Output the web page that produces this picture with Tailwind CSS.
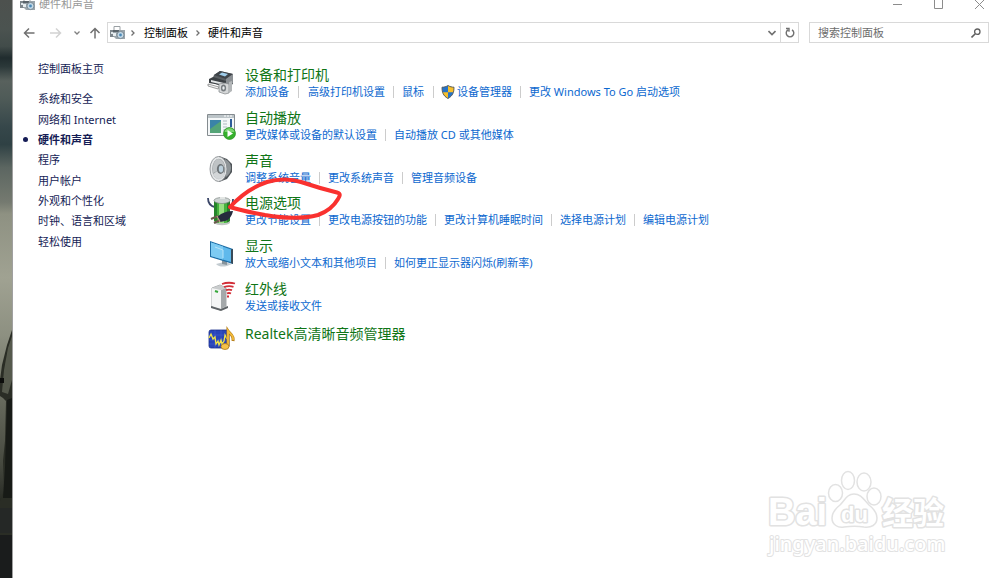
<!DOCTYPE html>
<html lang="zh-CN">
<head>
  <meta charset="UTF-8">
  <meta name="viewport" content="width=device-width, initial-scale=1.0">
  <title>硬件和声音</title>
  <script src="https://cdn.jsdelivr.net/npm/@tailwindcss/browser@4"></script>
</head>
<body class="flex min-h-screen bg-white font-['Noto_Sans','Noto_Sans_CJK_SC',sans-serif] text-[11px] leading-4 text-black overflow-x-hidden">

  <!-- Shared icon: printer and speaker -->
  <svg class="hidden">
    <symbol id="hardware" viewBox="0 0 15 14">
      <path d="M4 5V.5h6V5" fill="#fff" stroke="#9aa0a4"/>
      <path d="M0 4h4v7H0z" fill="#7d868c"/>
      <path d="M1 6h2v2H1z" fill="#dfe6ea"/>
      <path d="M3 4h12v9H6l-3-3z" fill="#9ba5ab"/>
      <path d="M3 4h6v2H3z" fill="#59636a"/>
      <path d="M3 7h3v3H3z" fill="#e8eef1"/>
      <circle cx="10.5" cy="9" r="3.6" fill="#c3d8e6" stroke="#7c8a94"/>
      <circle cx="10.5" cy="9" r="1.4" fill="#4b8ab8"/>
    </symbol>
  </svg>

  <!-- Desktop behind the window -->
  <div class="relative w-3 shrink-0">
    <svg class="absolute inset-0 w-full h-full" viewBox="0 0 12 578" preserveAspectRatio="none">
      <defs>
        <linearGradient id="sky" x1="0" y1="0" x2="0" y2="1">
          <stop offset="0" stop-color="#4d514e"/>
          <stop offset=".05" stop-color="#4b5350"/>
          <stop offset=".08" stop-color="#424c4a"/>
          <stop offset=".1" stop-color="#202c2e"/>
          <stop offset=".115" stop-color="#2b3839"/>
          <stop offset=".14" stop-color="#58615d"/>
          <stop offset=".17" stop-color="#4f5b58"/>
          <stop offset=".22" stop-color="#36474a"/>
          <stop offset=".25" stop-color="#2f4144"/>
          <stop offset=".29" stop-color="#5c6661"/>
          <stop offset=".35" stop-color="#757a70"/>
          <stop offset=".37" stop-color="#8e9182"/>
          <stop offset=".48" stop-color="#a0a292"/>
          <stop offset=".58" stop-color="#8d9081"/>
          <stop offset=".68" stop-color="#6a6d60"/>
          <stop offset=".8" stop-color="#474a40"/>
          <stop offset=".87" stop-color="#262923"/>
          <stop offset="1" stop-color="#1e201e"/>
        </linearGradient>
      </defs>
      <path d="M0 0h12v578H0z" fill="url(#sky)"/>
      <path d="M12 330L7 345 2 365 0 380v16l3 2 3 3-1 40-2 20 1 30-4 10v78h12z" fill="#2a2d25"/>
      <path d="M12 336L8 348 4 370 2 392l6 2 4-14z" fill="#55594c"/>
      <path d="M0 378h4v5H0z" fill="#0c0d0b"/>
      <path d="M7 400l5-2v100H3l2-30z" fill="#171a16"/>
      <path d="M0 508h12v25H0z" fill="#252826"/>
      <path d="M0 535h12v43H0z" fill="#1a1c1c"/>
    </svg>
  </div>

  <div class="relative flex-1 min-w-0 border-l border-[#a0a0a0]">
    <!-- Title bar -->
    <header class="flex items-center justify-between h-2 pl-[7px] pr-[15px]">
      <div class="flex items-center gap-1 text-[#999999]">
        <svg class="w-[15px] h-[14px]"><use href="#hardware"/></svg>
        <h1>硬件和声音</h1>
      </div>
      <div class="flex items-center gap-[30px]">
        <button aria-label="最小化"><svg class="w-[11px] h-[11px]" viewBox="0 0 11 11"><path d="M1 5.5h9" stroke="#8c8c8c"/></svg></button>
        <button aria-label="最大化"><svg class="w-[11px] h-[11px]" viewBox="0 0 11 11"><path d="M1.5 .5h8v9h-8z" fill="none" stroke="#8c8c8c"/></svg></button>
        <button aria-label="关闭"><svg class="w-[11px] h-[11px]" viewBox="0 0 11 11"><path d="M1 1l9 9M10 1l-9 9" stroke="#8c8c8c"/></svg></button>
      </div>
    </header>

    <!-- Navigation bar -->
    <nav class="flex items-center mt-[14px] pl-[10px] pr-[11px]">
      <button aria-label="后退"><svg class="w-3 h-3" viewBox="0 0 12 12"><path d="M11.5 6H1.5M6 1.5L1.5 6 6 10.5" fill="none" stroke="#707070" stroke-width="1.5"/></svg></button>
      <button class="ml-[15px]" aria-label="前进"><svg class="w-3 h-3" viewBox="0 0 12 12"><path d="M0 6h10.5M6 1.5L10.5 6 6 10.5" fill="none" stroke="#d2d2d2" stroke-width="1.5"/></svg></button>
      <button class="ml-3" aria-label="最近浏览的位置"><svg class="w-[6px] h-[6px]" viewBox="0 0 6 6"><path d="M.5 1.5L3 4l2.500-2.500" fill="none" stroke="#808080" stroke-width="1.3"/></svg></button>
      <button class="ml-[9px]" aria-label="上移"><svg class="w-3 h-3" viewBox="0 0 12 12"><path d="M6 11.5V1.5M1.5 6L6 1.5 10.5 6" fill="none" stroke="#707070" stroke-width="1.5"/></svg></button>
      <div class="flex items-center flex-1 h-[21px] ml-[6px] border border-[#d9d9d9]">
        <svg class="w-[15px] h-[14px] ml-[2px]"><use href="#hardware"/></svg>
        <svg class="w-[6px] h-2 ml-[5px]" viewBox="0 0 6 8"><path d="M1.5 1.5L4 4 1.5 6.5" fill="none" stroke="#707070" stroke-width="1.3"/></svg>
        <a href="#" class="ml-2">控制面板</a>
        <svg class="w-[6px] h-2 mx-[7px]" viewBox="0 0 6 8"><path d="M1.5 1.5L4 4 1.5 6.5" fill="none" stroke="#707070" stroke-width="1.3"/></svg>
        <a href="#">硬件和声音</a>
        <button class="ml-auto mr-1" aria-label="以前的位置"><svg class="w-2 h-2" viewBox="0 0 8 8"><path d="M.5 2L4 5.5 7.5 2" fill="none" stroke="#707070" stroke-width="1.6"/></svg></button>
        <button class="flex items-center justify-center w-[18px] h-full border-l border-[#d9d9d9]" aria-label="刷新"><svg class="w-[10px] h-[11px]" viewBox="0 0 10 11"><path d="M7 2.8A3.8 3.8 0 1 1 3 2.8M1 1.5h3v3.2" fill="none" stroke="#707070" stroke-width="1.4"/></svg></button>
      </div>
      <div class="flex items-center w-[180px] h-[21px] ml-[10px] pl-2 pr-[7px] border border-[#d9d9d9]">
        <input type="text" aria-label="搜索控制面板" placeholder="搜索控制面板" class="flex-1 min-w-0 outline-none placeholder:text-[#6d6d6d]">
        <button aria-label="搜索"><svg class="w-[10px] h-[10px]" viewBox="0 0 10 10"><circle cx="6.3" cy="3.7" r="2.7" fill="none" stroke="#606060" stroke-width="1.3"/><path d="M4.3 5.7L.5 9.5" stroke="#606060" stroke-width="1.6"/></svg></button>
      </div>
    </nav>

    <div class="flex pt-[19px]">
      <!-- Sidebar -->
      <aside class="w-[194px] shrink-0 text-[#151c55]">
        <a href="#" class="block pl-[25px] -mt-px">控制面板主页</a>
        <ul class="grid auto-rows-fr items-center h-[163px] mt-3">
          <li class="pl-[25px]"><a href="#">系统和安全</a></li>
          <li class="pl-[25px]"><a href="#">网络和 Internet</a></li>
          <li class="flex items-center gap-[10px] pl-[10px] font-bold"><span class="w-[5px] h-[5px] rounded-full bg-[#151c55]"></span><a href="#">硬件和声音</a></li>
          <li class="pl-[25px]"><a href="#">程序</a></li>
          <li class="pl-[25px]"><a href="#">用户帐户</a></li>
          <li class="pl-[25px]"><a href="#">外观和个性化</a></li>
          <li class="pl-[25px]"><a href="#">时钟、语言和区域</a></li>
          <li class="pl-[25px]"><a href="#">轻松使用</a></li>
        </ul>
      </aside>

      <!-- Categories -->
      <main class="flex-1 min-w-0 whitespace-nowrap text-[#0c68cf]">
        <div class="grid auto-rows-fr h-[256px]">
          <section class="flex items-center gap-[10px]">
            <svg class="w-7 h-7" viewBox="0 0 28 28">
              <path d="M7 6l6-4 13 3v10l-8 4L4 13z" fill="#5a5f63"/>
              <path d="M7 6l6-4 13 3-7 5z" fill="#3f4449"/>
              <path d="M12 5.5l3-2 6 1.500-3 2.500z" fill="#9fcdea"/>
              <path d="M19 10l7-5v9l-7 4z" fill="#8b9094"/>
              <path d="M2 10l4-2 13 4v5L2 14z" fill="#3c4145"/>
              <path d="M4 11l13 3v2L4 13z" fill="#e3e6e7"/>
              <path d="M1 15l11 3-1 2-10-3z" fill="#f2f3f3" stroke="#777" stroke-width=".7"/>
              <path d="M12 15l6-1 4 1v9l-4 1-6-2z" fill="#d5d7d8" stroke="#808486" stroke-width=".7"/>
              <ellipse cx="16.500" cy="19" rx="2.600" ry="3.500" fill="#777c80"/>
              <ellipse cx="16.500" cy="19" rx="1.200" ry="1.800" fill="#e9edef"/>
              <path d="M22 13l3-1v10l-3 2z" fill="#b3b6b8"/>
            </svg>
            <div>
              <h2 class="text-[14px] leading-[18px]"><a href="#" class="text-[#0f7516]">设备和打印机</a></h2>
              <div class="flex items-center gap-2">
                <a href="#">添加设备</a><span class="w-px h-3 mx-px bg-[#cccccc]"></span>
                <a href="#">高级打印机设置</a><span class="w-px h-3 bg-[#cccccc]"></span>
                <a href="#">鼠标</a><span class="w-px h-3 mx-px bg-[#cccccc]"></span>
                <a href="#" class="flex items-center gap-[2px] -ml-[2px]">
                  <svg class="w-[14px] h-[14px]" viewBox="0 0 14 14">
                    <path d="M7 .5C5 1.800 3 2.200 1 2.200c0 5 1 8.500 6 11.300 5-2.800 6-6.300 6-11.300-2 0-4-.4-6-1.700z" fill="#2573c8"/>
                    <path d="M7 .5c2 1.300 4 1.700 6 1.700 0 2 0 3.500-.6 5H7zM7 7.200v6.300C3.800 11.800 2.200 9.700 1.500 7.200z" fill="#f6bf2c"/>
                    <path d="M7 .5C5 1.800 3 2.200 1 2.200c0 5 1 8.500 6 11.300 5-2.800 6-6.300 6-11.300-2 0-4-.4-6-1.700z" fill="none" stroke="#56585a" stroke-width=".9"/>
                  </svg>设备管理器</a><span class="w-px h-3 bg-[#cccccc]"></span>
                <a href="#">更改 Windows To Go 启动选项</a>
              </div>
            </div>
          </section>

          <section class="flex items-center gap-[10px]">
            <svg class="w-7 h-7 overflow-visible" viewBox="0 0 28 28">
              <path d="M.5 2.500h27v21H.5z" fill="#f4f7f8" stroke="#848b8f"/>
              <path d="M1 3h26v3H1z" fill="#bcc4c8"/>
              <path d="M17 4h2M20 4h2M23 4h2" stroke="#fff"/>
              <path d="M3 8h11v13H3z" fill="#3a83a8"/>
              <path d="M3 17l11-8v12H3z" fill="#54a477"/>
              <path d="M16 9h4M16 12h4M16 15h4M16 18h3" stroke="#aebac1"/>
              <path d="M24 7v8" stroke="#2e5c9a" stroke-width="2"/>
              <circle cx="22.500" cy="21.500" r="6" fill="#35b02c" stroke="#2a8e23" stroke-width=".7"/>
              <path d="M17.500 20a5.200 5 0 0 1 10 0z" fill="#7bd570"/>
              <path d="M20.500 18l5.500 3.500-5.500 3.500z" fill="#fff"/>
            </svg>
            <div>
              <h2 class="text-[14px] leading-[18px]"><a href="#" class="text-[#0f7516]">自动播放</a></h2>
              <div class="flex items-center gap-2">
                <a href="#">更改媒体或设备的默认设置</a><span class="w-px h-3 bg-[#cccccc]"></span>
                <a href="#">自动播放 CD 或其他媒体</a>
              </div>
            </div>
          </section>

          <section class="flex items-center gap-[10px]">
            <svg class="w-7 h-7" viewBox="0 0 28 28">
              <path d="M12 1l8 3 5 5v8l-5 7-8 3z" fill="#4f5458"/>
              <path d="M18 4c4 2 6 5 6 9s-2 7-5 9z" fill="#8f9598"/>
              <ellipse cx="11.500" cy="14" rx="8.500" ry="12.500" fill="#e3e5e6" stroke="#8b9093" stroke-width=".9"/>
              <ellipse cx="11.800" cy="14" rx="6.600" ry="10.200" fill="#9a9fa2"/>
              <path d="M6 18c-1-7 1-13 5-14 4 0 6 4 7 8l-6 3z" fill="#bfc3c5"/>
              <path d="M6 19l6-4 6 3c-1 4-3 6-6 6s-5-2-6-5z" fill="#d3d6d8"/>
              <ellipse cx="13.500" cy="14" rx="3.600" ry="5" fill="#6d7377"/>
              <ellipse cx="14" cy="14" rx="2.200" ry="3.400" fill="#bcd0dc"/>
            </svg>
            <div>
              <h2 class="text-[14px] leading-[18px]"><a href="#" class="text-[#0f7516]">声音</a></h2>
              <div class="flex items-center gap-2">
                <a href="#">调整系统音量</a><span class="w-px h-3 bg-[#cccccc]"></span>
                <a href="#">更改系统声音</a><span class="w-px h-3 bg-[#cccccc]"></span>
                <a href="#">管理音频设备</a>
              </div>
            </div>
          </section>

          <section class="relative flex items-center gap-[10px]">
            <svg class="w-7 h-7 overflow-visible" viewBox="0 0 28 28">
              <path d="M1 1c0 5 2 8 7 9M26 2c0 5-1 7-4 8" fill="none" stroke="#3b4668" stroke-width="1.800"/>
              <path d="M7 4h16v20c-3 4-13 4-16 0z" fill="#45b23e"/>
              <path d="M7 4h3v22c-2-1-3-2-3-3z" fill="#26852a"/>
              <path d="M12 5h5v22h-5z" fill="#98df82"/>
              <path d="M20 4h3v20l-3 3z" fill="#267e29"/>
              <ellipse cx="15" cy="3.500" rx="8" ry="3" fill="#cdd3d2" stroke="#7c8583" stroke-width=".7"/>
              <path d="M13 0h5v2h-5z" fill="#e3e6e4"/>
              <path d="M7 24c3 3 13 3 16 0v2c-3 3-13 3-16 0z" fill="#c0c6c3"/>
              <path d="M26 14c-5 0-8 1-12 3l-4 3 3 5 5-1c4-1 7-5 8-10z" fill="#252b3d"/>
              <path d="M11 19l-7 3M13 23l-6 3" stroke="#6b5a4c" stroke-width="2"/>
              <path d="M10 19l3 6" stroke="#c9a489"/>
            </svg>
            <div>
              <h2 class="text-[14px] leading-[18px]"><a href="#" class="text-[#0f7516]">电源选项</a></h2>
              <div class="flex items-center gap-2">
                <a href="#">更改节能设置</a><span class="w-px h-3 bg-[#cccccc]"></span>
                <a href="#">更改电源按钮的功能</a><span class="w-px h-3 bg-[#cccccc]"></span>
                <a href="#">更改计算机睡眠时间</a><span class="w-px h-3 bg-[#cccccc]"></span>
                <a href="#">选择电源计划</a><span class="w-px h-3 bg-[#cccccc]"></span>
                <a href="#">编辑电源计划</a>
              </div>
            </div>
            <!-- Hand-drawn red marker -->
            <svg class="absolute left-[15px] -top-[18px] w-[126px] h-[54px] pointer-events-none" viewBox="222 172 126 54">
              <path d="M230 207C240 196 252 187 267 182C278 179 291 179 301 182C316 187 327 190 337 192.500C341 193.500 340 196 338 199C334 206 329 211 318 215C303 219 282 218 265 215C250 212 242 211 230 207" fill="none" stroke="#f9312f" stroke-width="4" stroke-linecap="round" stroke-linejoin="round"/>
            </svg>
          </section>

          <section class="flex items-center gap-[10px]">
            <svg class="w-7 h-7" viewBox="0 0 28 28">
              <path d="M9 24l8-2 8 2-5 2c-4 1-8 1-11-2z" fill="#c3cbd0"/>
              <path d="M15 20l5 1v4l-5-1z" fill="#87939b"/>
              <path d="M3 1l23 8v15L3 17z" fill="#1e6ea6"/>
              <path d="M4 2.500l20 7v12.500L4 16z" fill="#5fb9ec"/>
              <path d="M4 2.500l12 4v13L4 16z" fill="#7dcbf3"/>
              <path d="M8 7l8 3v8" fill="none" stroke="#b6e3f9"/>
              <path d="M24 9.500l2-.5v15l-2-1z" fill="#394a58"/>
            </svg>
            <div>
              <h2 class="text-[14px] leading-[18px]"><a href="#" class="text-[#0f7516]">显示</a></h2>
              <div class="flex items-center gap-2">
                <a href="#">放大或缩小文本和其他项目</a><span class="w-px h-3 bg-[#cccccc]"></span>
                <a href="#">如何更正显示器闪烁(刷新率)</a>
              </div>
            </div>
          </section>

          <section class="flex items-center gap-[10px]">
            <svg class="w-7 h-7 overflow-visible" viewBox="0 0 28 28">
              <path d="M5 5l8-3 6 3v19l-6 3-8-3z" fill="#dcdedf" stroke="#7f8487" stroke-width=".7"/>
              <path d="M5 5l9 2v19l-9-3z" fill="#f4f5f5"/>
              <path d="M14 7l5-2v18l-5 3z" fill="#a4a8aa"/>
              <path d="M5 5l8-3 6 3-5 2z" fill="#c9cccd"/>
              <path d="M4 23l10 3 7-3v2l-7 3-10-3z" fill="#5e6366"/>
              <path d="M8 8l3 1" stroke="#35a83a" stroke-width="2"/>
              <path d="M15 1c4-1.500 9-1.500 13-.5M17 4c3-1 7-1 9.500-.2M19 7.200c2-.8 4-.8 6 0M20 10.500c1-.5 3-.5 4 0M20 13.500h2" fill="none" stroke="#d22f38" stroke-width="1.800"/>
            </svg>
            <div>
              <h2 class="text-[14px] leading-[18px]"><a href="#" class="text-[#0f7516]">红外线</a></h2>
              <div class="flex items-center gap-2">
                <a href="#">发送或接收文件</a>
              </div>
            </div>
          </section>
        </div>

        <section class="flex items-start gap-[10px] pt-[7px]">
          <svg class="w-7 h-7 overflow-visible" viewBox="0 0 28 28">
            <rect x="2" y="5" width="20" height="18" rx="2" fill="#2945b8" stroke="#1b2f8c" stroke-width=".8"/>
            <path d="M2 10h20M2 15h20M2 19h20M8 5v18M14 5v18" stroke="#4863d4" stroke-width=".5"/>
            <path d="M2 13l2-4 2 5 2-2 1 7 2-3 1 4 2-5 1 4 2-3 1-6 2 4" fill="none" stroke="#f1e54a" stroke-width="1.300"/>
            <path d="M21 21V6c2 3 6 4 5 10" fill="none" stroke="#b27a14" stroke-width="3"/>
            <path d="M21 20V6c2 3 6 4 5 9" fill="none" stroke="#f3bb3c" stroke-width="1.800"/>
            <ellipse cx="18" cy="21.500" rx="4" ry="3" fill="#f5c14a" stroke="#b27a14" stroke-width=".8"/>
          </svg>
          <h2 class="text-[14px] leading-[18px]"><a href="#" class="text-[#0f7516]">Realtek高清晰音频管理器</a></h2>
        </section>
      </main>
    </div>

    <!-- Watermark -->
    <svg class="absolute right-[50px] bottom-[18px] w-[190px] h-[92px] pointer-events-none" viewBox="760 468 190 92" fill="#fff" stroke="#e2e2e2">
      <g stroke-width="1.500">
        <ellipse cx="835.500" cy="493" rx="7" ry="8.500"/>
        <ellipse cx="848" cy="480.500" rx="6.500" ry="9"/>
        <ellipse cx="864" cy="482" rx="7" ry="9"/>
        <ellipse cx="874" cy="496.500" rx="7" ry="8.500"/>
        <path d="M854 494c-7 0-9 6-14 11-5 4-8 8-8 13 0 7 6 10 12 9 7-1 14-1 20 0 7 1 13-2 13-9 0-5-3-9-8-13-5-5-8-11-15-11z"/>
      </g>
      <g class="font-['Liberation_Sans','Noto_Sans_CJK_SC',sans-serif] font-bold" stroke-width="3" stroke-linejoin="round" paint-order="stroke">
        <text x="768" y="525" font-size="38">Bai</text>
        <text x="841" y="522" font-size="22">du</text>
        <text x="882" y="524" font-size="31">经验</text>
      </g>
      <text x="769" y="551" font-size="20" stroke-width="2" stroke-linejoin="round" paint-order="stroke" class="font-['Noto_Sans',sans-serif] font-medium">jingyan.baidu.com</text>
    </svg>
  </div>
</body>
</html>
